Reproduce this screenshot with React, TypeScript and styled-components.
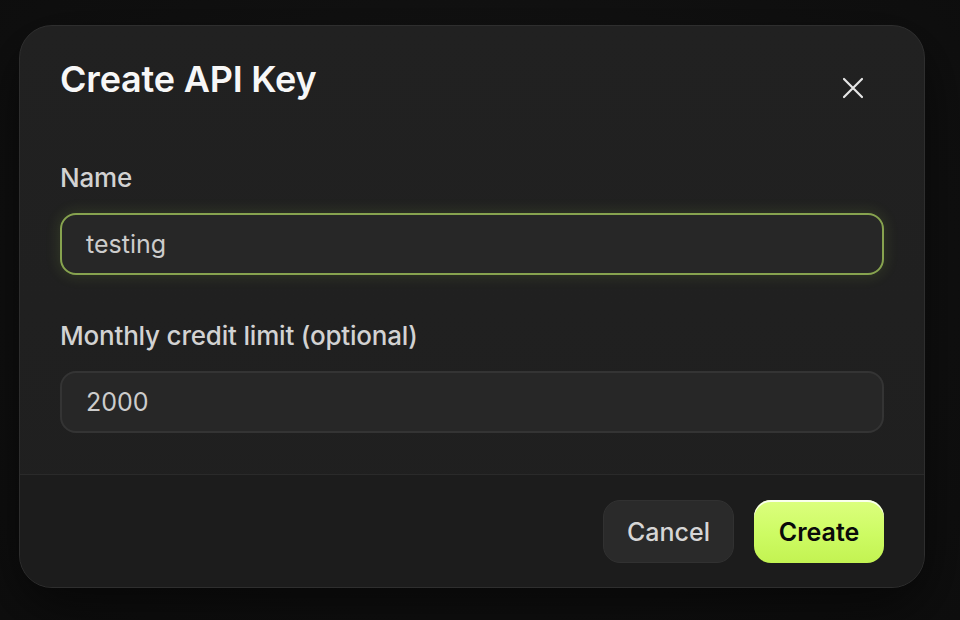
import React from "react";
import styled, { createGlobalStyle } from "styled-components";

const Global = createGlobalStyle`
  * { box-sizing: border-box; }
  html, body { margin: 0; padding: 0; background: #0f0f0f; }
  body { font-family: "Inter", "Roboto", "Noto Sans", sans-serif; -webkit-font-smoothing: antialiased; }
`;

const Page = styled.div`
  width: 960px;
  height: 620px;
  padding: 25px 0 0 19px;
  background: radial-gradient(ellipse at 50% 45%, #161616 0%, #101010 70%, #0e0e0e 100%);
  overflow: hidden;
`;

const Dialog = styled.div`
  width: 906px;
  height: 563px;
  border: 1px solid #2e2e2e;
  border-radius: 33px;
  background: linear-gradient(180deg, #212121 0%, #1f1f1f 100%);
  box-shadow: 0 20px 60px rgba(0, 0, 0, 0.6);
  overflow: hidden;
  display: flex;
  flex-direction: column;
`;

const Header = styled.div`
  display: flex;
  align-items: flex-start;
  justify-content: space-between;
  padding: 31px 40px 0 40px;
`;

const Title = styled.h2`
  margin: 0;
  font-size: 36px;
  line-height: 44px;
  font-weight: 600;
  color: #f7f7f7;
  letter-spacing: -0.2px;
`;

const CloseButton = styled.button`
  width: 40px;
  height: 40px;
  margin: 11px 11px 0 0;
  padding: 0;
  border: none;
  background: transparent;
  display: flex;
  align-items: center;
  justify-content: center;
  color: #e6e6e6;
  cursor: pointer;
`;

const Body = styled.div`
  display: flex;
  flex-direction: column;
  padding: 54px 40px 41px 40px;
`;

const Field = styled.div<{ $gap?: number }>`
  display: flex;
  flex-direction: column;
  gap: 19px;
  margin-top: ${(p) => p.$gap ?? 0}px;
`;

const Label = styled.label`
  font-size: 26px;
  line-height: 32px;
  font-weight: 500;
  color: #d2d2d2;
  letter-spacing: -0.2px;
`;

const Input = styled.div<{ $focused?: boolean }>`
  height: 62px;
  border-radius: 16px;
  background: #272727;
  border: ${(p) => (p.$focused ? "2px solid #87a34f" : "2px solid #343434")};
  box-shadow: ${(p) =>
    p.$focused ? "0 0 14px 2px rgba(170, 220, 80, 0.12)" : "none"};
  display: flex;
  align-items: center;
  padding: 0 24px;
  font-size: 25px;
  color: #cccccc;
  font-weight: 400;
`;

const Footer = styled.div`
  border-top: 1px solid #2a2a2a;
  background: #1c1c1c;
  flex: 1;
  display: flex;
  justify-content: flex-end;
  align-items: flex-start;
  gap: 20px;
  padding: 25px 40px 0 40px;
`;

const Button = styled.button<{ $primary?: boolean }>`
  height: 63px;
  width: ${(p) => (p.$primary ? "130px" : "131px")};
  border-radius: 17px;
  font-family: inherit;
  font-size: 25px;
  font-weight: ${(p) => (p.$primary ? 600 : 500)};
  cursor: pointer;
  color: ${(p) => (p.$primary ? "#0a0a0a" : "#d6d6d6")};
  border: ${(p) => (p.$primary ? "none" : "1px solid #313131")};
  background: ${(p) =>
    p.$primary
      ? "linear-gradient(180deg, #dcff7e 0%, #cdfb63 55%, #c3f352 100%)"
      : "#2a2a2a"};
  box-shadow: ${(p) =>
    p.$primary ? "inset 0 2px 0 rgba(255,255,255,0.85)" : "none"};
`;

export default function App() {
  return (
    <>
      <Global />
      <Page>
        <Dialog>
          <Header>
            <Title>Create API Key</Title>
            <CloseButton aria-label="Close">
              <svg width="22" height="22" viewBox="0 0 22 22" fill="none">
                <path d="M2 2 L20 20 M20 2 L2 20" stroke="currentColor" strokeWidth="2.2" strokeLinecap="round" />
              </svg>
            </CloseButton>
          </Header>
          <Body>
            <Field>
              <Label>Name</Label>
              <Input $focused>testing</Input>
            </Field>
            <Field $gap={45}>
              <Label>Monthly credit limit (optional)</Label>
              <Input>2000</Input>
            </Field>
          </Body>
          <Footer>
            <Button>Cancel</Button>
            <Button $primary>Create</Button>
          </Footer>
        </Dialog>
      </Page>
    </>
  );
}
